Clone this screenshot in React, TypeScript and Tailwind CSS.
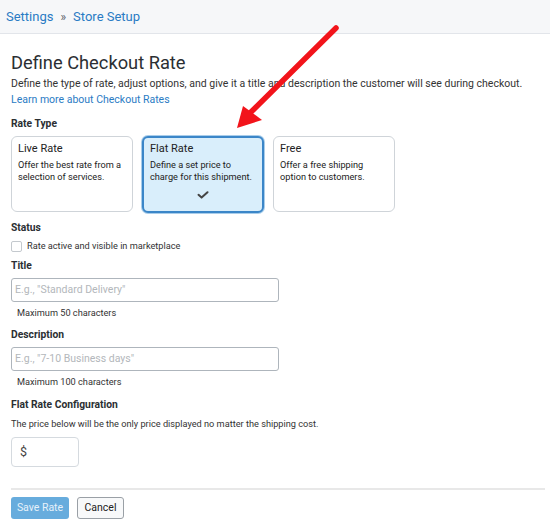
import React from "react";

const FONT = { fontFamily: "Roboto, 'Liberation Sans', sans-serif" };

type RateOption = {
  key: string;
  title: string;
  body: string;
};

const RATE_OPTIONS: RateOption[] = [
  { key: "live", title: "Live Rate", body: "Offer the best rate from a selection of services." },
  { key: "flat", title: "Flat Rate", body: "Define a set price to charge for this shipment." },
  { key: "free", title: "Free", body: "Offer a free shipping option to customers." },
];

function RateCard({ option, selected }: { option: RateOption; selected: boolean }) {
  return (
    <div
      className={
        selected
          ? "flex h-[77px] w-[122px] flex-col rounded-[6px] border-2 border-[#3b86c8] bg-[#d9eefb] px-[6px] pt-[4px] shadow-[0_0_0_1px_#a9cdea]"
          : "flex h-[76px] w-[122px] flex-col rounded-[6px] border border-[#cfd4d9] bg-white px-[6px] pt-[5px]"
      }
    >
      <div className="text-[11px] leading-[14px] text-[#222]">{option.title}</div>
      <div className="mt-[3px] text-[9.2px] leading-[11.5px] text-[#222]">{option.body}</div>
      {selected && (
        <svg className="mx-auto mt-[9px] h-[8px] w-[12px]" viewBox="0 0 12 8" fill="none">
          <path d="M1.5 3.8 4.6 6.6 10.5 1.2" stroke="#444" strokeWidth={2} strokeLinecap="round" strokeLinejoin="round" />
        </svg>
      )}
    </div>
  );
}

export default function App() {
  return (
    <div className="relative h-[522px] w-[550px] overflow-hidden bg-white text-[#333]" style={FONT}>
      <div className="flex h-[34px] items-center gap-[7px] border-b border-[#e2e5ea] bg-[#f6f7f9] pl-[6px] text-[13px] text-[#2a7bc4]">
        <span>Settings</span>
        <span className="text-[12px] text-[#5b6168]">»</span>
        <span>Store Setup</span>
      </div>

      <div className="px-[11px]">
        <h1 className="mt-[17px] text-[18.3px] leading-[24px] text-[#2b2f33]">Define Checkout Rate</h1>
        <p className="mt-[1px] text-[10.5px] leading-[16px] text-[#333]">
          Define the type of rate, adjust options, and give it a title and description the customer will see during checkout.
        </p>
        <a className="block text-[10.5px] leading-[16px] text-[#2a7bc4]">Learn more about Checkout Rates</a>

        <div className="mt-[9px] text-[10.3px] font-bold leading-[14px] text-[#2b2f33]">Rate Type</div>
        <div className="mt-[5px] flex items-start gap-[9px]">
          {RATE_OPTIONS.map((o) => (
            <RateCard key={o.key} option={o} selected={o.key === "flat"} />
          ))}
        </div>

        <div className="mt-[8px] text-[10.3px] font-bold leading-[14px] text-[#2b2f33]">Status</div>
        <label className="mt-[4px] flex h-[14px] items-center gap-[5px]">
          <span className="h-[11px] w-[11px] rounded-[2px] border border-[#c4c9ce] bg-white" />
          <span className="text-[9.2px] text-[#333]">Rate active and visible in marketplace</span>
        </label>

        <div className="mt-[6px] text-[10.3px] font-bold leading-[14px] text-[#2b2f33]">Title</div>
        <div className="mt-[5px] flex h-[24px] w-[268px] items-center rounded-[3px] border border-[#aeb5bc] px-[3px] text-[10.5px] text-[#b3b7bb]">
          E.g., "Standard Delivery"
        </div>
        <div className="mt-[4px] pl-[6px] text-[9.2px] leading-[13px] text-[#333]">Maximum 50 characters</div>

        <div className="mt-[9px] text-[10.3px] font-bold leading-[14px] text-[#2b2f33]">Description</div>
        <div className="mt-[5px] flex h-[24px] w-[268px] items-center rounded-[3px] border border-[#aeb5bc] px-[3px] text-[10.5px] text-[#b3b7bb]">
          E.g., "7-10 Business days"
        </div>
        <div className="mt-[4px] pl-[6px] text-[9.2px] leading-[13px] text-[#333]">Maximum 100 characters</div>

        <div className="mt-[10px] text-[10.3px] font-bold leading-[14px] text-[#2b2f33]">Flat Rate Configuration</div>
        <p className="mt-[5px] text-[9.2px] leading-[13px] text-[#333]">
          The price below will be the only price displayed no matter the shipping cost.
        </p>
        <div className="mt-[7px] flex h-[30px] w-[68px] items-center rounded-[4px] border border-[#d5dadf] px-[8px] text-[12.5px] text-[#444]">
          $
        </div>

        <div className="mt-[21px] h-[2px] w-[534px] bg-[#e8e8e8]" />

        <div className="mt-[7px] flex gap-[8px]">
          <button className="h-[22px] w-[58px] rounded-[3px] bg-[#67acdd] text-[10.5px] text-[#e6f1fa]">Save Rate</button>
          <button className="h-[22px] w-[47px] rounded-[3px] border border-[#9aa0a6] bg-[#f8f9fa] text-[10.5px] text-[#222]">Cancel</button>
        </div>
      </div>

      <svg className="pointer-events-none absolute left-0 top-0" width={550} height={522} viewBox="0 0 550 522">
        <line x1={336} y1={28} x2={250} y2={113} stroke="#f2141b" strokeWidth={5.5} strokeLinecap="round" />
        <polygon points="237,128 243,106 262,120" fill="#f2141b" />
      </svg>
    </div>
  );
}
